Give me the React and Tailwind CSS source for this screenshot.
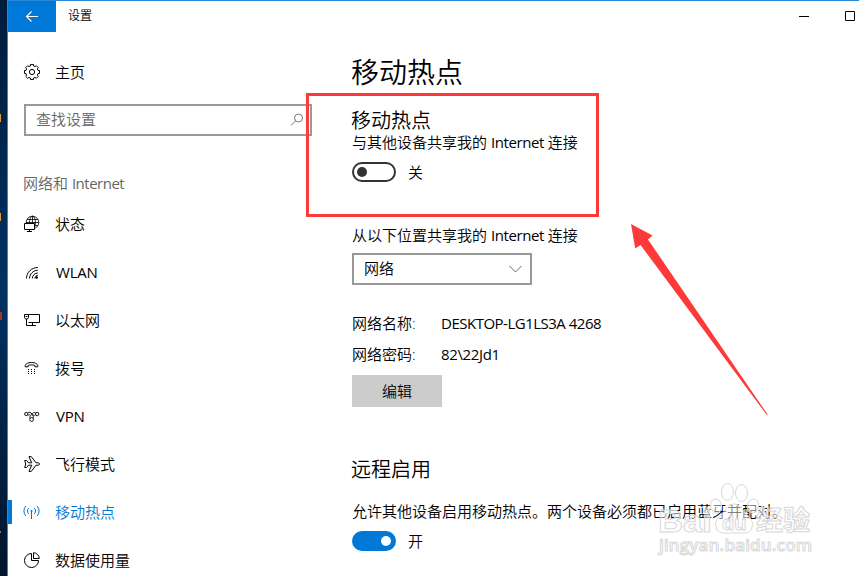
import React from "react";

const FONT = "font-['Open_Sans','Noto_Sans_CJK_SC',sans-serif]";

function Icon({ children, className = "" }) {
  return (
    <svg
      width="16"
      height="16"
      viewBox="0 0 16 16"
      fill="none"
      stroke="currentColor"
      strokeWidth="1"
      className={`shrink-0 overflow-visible ${className}`}
    >
      {children}
    </svg>
  );
}

function gearPath() {
  const pts = [];
  for (let i = 0; i < 8; i++) {
    const a = (i * Math.PI) / 4;
    [[-0.26, 6.2], [-0.2, 7.7], [0.2, 7.7], [0.26, 6.2]].forEach(([d, r]) => {
      pts.push(`${(8 + r * Math.sin(a + d)).toFixed(2)} ${(8 - r * Math.cos(a + d)).toFixed(2)}`);
    });
  }
  return `M${pts.join("L")}Z`;
}

const GearIcon = () => (
  <Icon>
    <path d={gearPath()} strokeLinejoin="round" />
    <circle cx="8" cy="8" r="2.6" />
  </Icon>
);

const StatusIcon = () => (
  <Icon>
    <g strokeWidth=".8">
      <circle cx="8.500" cy="6.500" r="6.300" />
      <ellipse cx="8.500" cy="6.500" rx="3" ry="6.300" />
      <path d="M8.500 0v8M3 3.500h11M2 6.500h13M9 9.500h5" />
    </g>
    <path d="M.5 7.500h10v6H.5z" fill="#fff" />
    <path d="M5.500 13.500v2M3 15.500h5" />
  </Icon>
);

const WlanIcon = () => (
  <Icon>
    <path d="M2.500 14.500C2.500 8.500 7.500 3.500 13.800 3.500M5.500 14.500c0-4.500 3.800-8.200 8.300-8.200M8.300 14.500c0-3 2.500-5.500 5.500-5.500M10.800 14.500c.1-1.700 1.400-3 3-3.100" />
    <circle cx="12.700" cy="13.500" r="1.200" fill="currentColor" stroke="none" />
  </Icon>
);

const EthernetIcon = () => (
  <Icon>
    <path d="M4.500 2.500h11v8h-11M8.500 10.500v3M5 13.500h7M.5 2.500h4v3l-1 1.500h-2L.5 5.500zM2.500 7v6.500M1.500 4.500h2M2.500 13.500H5" />
  </Icon>
);

const DialIcon = () => (
  <Icon>
    <path d="M1.200 6.800C.8 4 3.500 2.500 7.500 2.500s6.700 1.500 6.300 4.300h-2.900V5.400c-1.900-.6-4.900-.6-6.800 0v1.400z" strokeLinejoin="round" />
    <path d="M4 9.500h1M7 9.500h1M10 9.500h1M4 11.500h1M7 11.500h1M10 11.500h1M4 13.500h1M7 13.500h1M10 13.500h1" />
  </Icon>
);

const VpnIcon = () => (
  <Icon>
    <g strokeWidth=".9">
      <circle cx="2.200" cy="6" r="1.600" />
      <circle cx="13.200" cy="6" r="1.700" />
      <circle cx="7.600" cy="11.500" r="1.900" />
      <path d="M3.500 5C5.500 3.600 6.800 4.500 8 6s2.200 1.800 3.500.8M11.700 5C9.800 3.800 8.800 5 7.600 6.500S5.200 9 6.200 10.200M9.200 10.400C10 9 9 7.800 8 6.500M3.600 6.800c1.200.4 2 .2 2.700-.6" />
    </g>
  </Icon>
);

const PlaneIcon = () => (
  <Icon>
    <path
      d="M.7 4.500h1.800l2 2.300h3.200L5 .6h2.300l4.700 6.200h2c1.100 0 1.600.6 1.600 1.200s-.5 1.200-1.600 1.200h-2l-4.700 6.200H5l2.700-6.200H4.500l-2 2.300H.7L1.700 8z"
      strokeLinejoin="round"
    />
  </Icon>
);

const HotspotIcon = () => (
  <Icon>
    <path d="M7.500 7v8M4.800 10a4 4 0 0 1 0-6M10.200 10a4 4 0 0 0 0-6M1.900 12a7.300 7.300 0 0 1 0-10M13.100 12a7.300 7.300 0 0 0 0-10" />
    <circle cx="7.500" cy="7" r="1" fill="currentColor" stroke="none" />
  </Icon>
);

const DataIcon = () => (
  <Icon>
    <path d="M7.500 1.500A7 7 0 1 0 14.500 8.500h-7z" />
    <path d="M9.500.7v5.800h5.800A6 6 0 0 0 9.500.7z" />
  </Icon>
);

const NAV = [
  { icon: StatusIcon, label: "状态" },
  { icon: WlanIcon, label: "WLAN", latin: true },
  { icon: EthernetIcon, label: "以太网" },
  { icon: DialIcon, label: "拨号" },
  { icon: VpnIcon, label: "VPN", latin: true },
  { icon: PlaneIcon, label: "飞行模式" },
  { icon: HotspotIcon, label: "移动热点", active: true },
  { icon: DataIcon, label: "数据使用量" },
];

function Desktop() {
  return (
    <div className="flex w-[7px] shrink-0 flex-col bg-linear-to-b from-[#001c3c] via-[#003263] to-[#00152e]">
      <div className="mt-[114px] h-2 w-px bg-[#e8963c]" />
      <div className="mt-[91px] h-2 w-px bg-[#e8963c]" />
      <div className="mt-[91px] h-2 w-[2px] bg-[#a03428]" />
      <div className="mt-[211px] h-[2px] w-px bg-[#c8602a]" />
    </div>
  );
}

function TitleBar() {
  return (
    <header className="flex h-[31px] shrink-0 items-center">
      <button className="flex h-[31px] w-12 items-center justify-center bg-[#0078d7] pb-px text-white">
        <svg width="14" height="12" viewBox="0 0 14 12" fill="none" stroke="currentColor" strokeWidth="1.100">
          <path d="M13 6.500H1.500M6.500 1.500l-5 5 5 5" />
        </svg>
      </button>
      <span className="ml-3 pb-px text-[12px] leading-4">设置</span>
      <svg className="ml-auto mr-[3px] mb-0.5 shrink-0" width="60" height="12" fill="none" stroke="#000">
        <path d="M3 6.500h10M49.500 1.500h9v9h-9z" />
      </svg>
    </header>
  );
}

function Sidebar() {
  return (
    <aside className="flex w-[304px] shrink-0 flex-col pt-4">
      <div className="flex h-12 shrink-0 items-center gap-4 pl-4">
        <GearIcon />
        <span className="-ml-px">主页</span>
      </div>
      <div className="ml-4 mt-2 flex h-8 w-72 shrink-0 items-center justify-between border-2 border-[#999] pl-[10px] pr-[6px] text-[#666]">
        <span className="pb-px">查找设置</span>
        <svg width="14" height="14" viewBox="0 0 14 14" fill="none" stroke="#777">
          <circle cx="8.500" cy="5" r="4" />
          <path d="M5.500 8L1 12.500" />
        </svg>
      </div>
      <div className="ml-[15px] mt-[35px] h-6 shrink-0 leading-6 text-[#666]">
        网络和 <span className="font-normal tracking-[-0.5px]">Internet</span>
      </div>
      <nav className="mt-[5px] flex shrink-0 flex-col">
        {NAV.map(({ icon: Glyph, label, active, latin }) => (
          <div key={label} className={`flex h-12 shrink-0 items-center ${active ? "text-[#0078d7]" : ""}`}>
            <div className={`h-6 w-1 ${active ? "bg-[#0078d7]" : ""}`} />
            <div className="ml-3 mr-4">
              <Glyph />
            </div>
            <span className={latin ? "font-normal tracking-[-0.2px]" : "-ml-px"}>{label}</span>
          </div>
        ))}
      </nav>
    </aside>
  );
}

function Toggle({ on, label }) {
  return (
    <div className="flex h-5 items-center gap-3">
      <div
        className={`flex h-5 w-11 items-center rounded-full border-2 px-[3px] ${
          on ? "justify-end border-[#0078d7] bg-[#0078d7]" : "border-[#333] bg-white"
        }`}
      >
        <div className={`size-[10px] rounded-full ${on ? "bg-white" : "bg-[#333]"}`} />
      </div>
      <span>{label}</span>
    </div>
  );
}

function Main() {
  return (
    <main className="flex min-w-0 flex-1 flex-col items-start whitespace-nowrap pl-10 pt-5 leading-5">
      <h1 className="-ml-px h-10 text-[28px] leading-10">移动热点</h1>
      <h2 className="-ml-px mt-[17px] h-6 text-[20px] leading-6">移动热点</h2>
      <p className="-mt-px h-5">
        与其他设备共享我的 <span className="font-normal tracking-[-0.4px]">Internet</span> 连接
      </p>
      <div className="mt-[10px]">
        <Toggle label="关" />
      </div>
      <p className="mt-[43px] h-5">
        从以下位置共享我的 <span className="font-normal tracking-[-0.4px]">Internet</span> 连接
      </p>
      <div className="mt-2 flex h-8 w-[180px] items-center justify-between border-2 border-[#999] pl-[10px] pr-2">
        <span className="pb-0.5">网络</span>
        <svg width="13" height="8" viewBox="0 0 13 8" fill="none" stroke="#666">
          <path d="M.5 1l6 6 6-6" />
        </svg>
      </div>
      <div className="mt-[28px] flex h-5">
        <span className="w-[89px]">网络名称:</span>
        <span className="font-normal tracking-[-0.5px]">DESKTOP-LG1LS3A 4268</span>
      </div>
      <div className="mt-[11px] flex h-5">
        <span className="w-[89px]">网络密码:</span>
        <span className="font-normal tracking-[-0.35px]">82\22Jd1</span>
      </div>
      <button className="mt-[11px] h-8 w-[90px] bg-[#ccc]">编辑</button>
      <h2 className="-ml-px mt-[49px] h-7 text-[20px] leading-7">远程启用</h2>
      <p className="mt-[17px] h-5">允许其他设备启用移动热点。两个设备必须都已启用蓝牙并配对。</p>
      <div className="mt-[10px]">
        <Toggle on label="开" />
      </div>
    </main>
  );
}

function Watermark() {
  return (
    <svg
      className="absolute left-[650px] top-[476px]"
      width="180"
      height="90"
      fill="#fff"
      fillOpacity=".5"
      stroke="#d8d8d8"
      strokeWidth="1"
    >
      <ellipse cx="77.500" cy="16" rx="6" ry="8.500" />
      <ellipse cx="91.500" cy="17" rx="6" ry="8.500" />
      <ellipse cx="66" cy="30" rx="5.500" ry="7" transform="rotate(-15 66 30)" />
      <ellipse cx="103" cy="30" rx="5.500" ry="7" transform="rotate(15 103 30)" />
      <path d="M84 28c-6 0-8 6-13 11-5 4-7 8-4 15 3 4 9 3 17 3s14 1 17-3c3-7 1-11-4-15-5-5-7-11-13-11z" />
      <g className="font-['Liberation_Sans',sans-serif] font-bold">
        <text x="8" y="56" fontSize="32" textLength="54" lengthAdjust="spacingAndGlyphs">Bai</text>
        <text x="72" y="54" fontSize="20">du</text>
      </g>
      <text x="106" y="54" fontSize="27" className="font-['Noto_Sans_CJK_SC',sans-serif] font-bold">经验</text>
      <text x="9" y="75" fontSize="17" textLength="153" className="font-['Open_Sans',sans-serif] font-semibold">jingyan.baidu.com</text>
    </svg>
  );
}

export default function App() {
  return (
    <div className={`relative flex h-[576px] w-[859px] overflow-hidden bg-white text-[15px] font-[350] text-black ${FONT}`}>
      <Desktop />
      <div className="flex min-w-0 flex-1 flex-col border-l border-t border-[#2b88d8]">
        <TitleBar />
        <div className="flex min-h-0 flex-1">
          <Sidebar />
          <Main />
        </div>
      </div>
      <Watermark />
      <div className="absolute left-[306px] top-[93px] h-[124px] w-[293px] border-3 border-[#fd3a3a]" />
      <svg className="absolute left-[600px] top-[210px]" width="180" height="220">
        <path d="M31 14L52.500 25.500L48 29.500L168 205L166.500 204.500L40.500 35L35.200 38.500Z" fill="#fd3a3a" />
      </svg>
    </div>
  );
}
